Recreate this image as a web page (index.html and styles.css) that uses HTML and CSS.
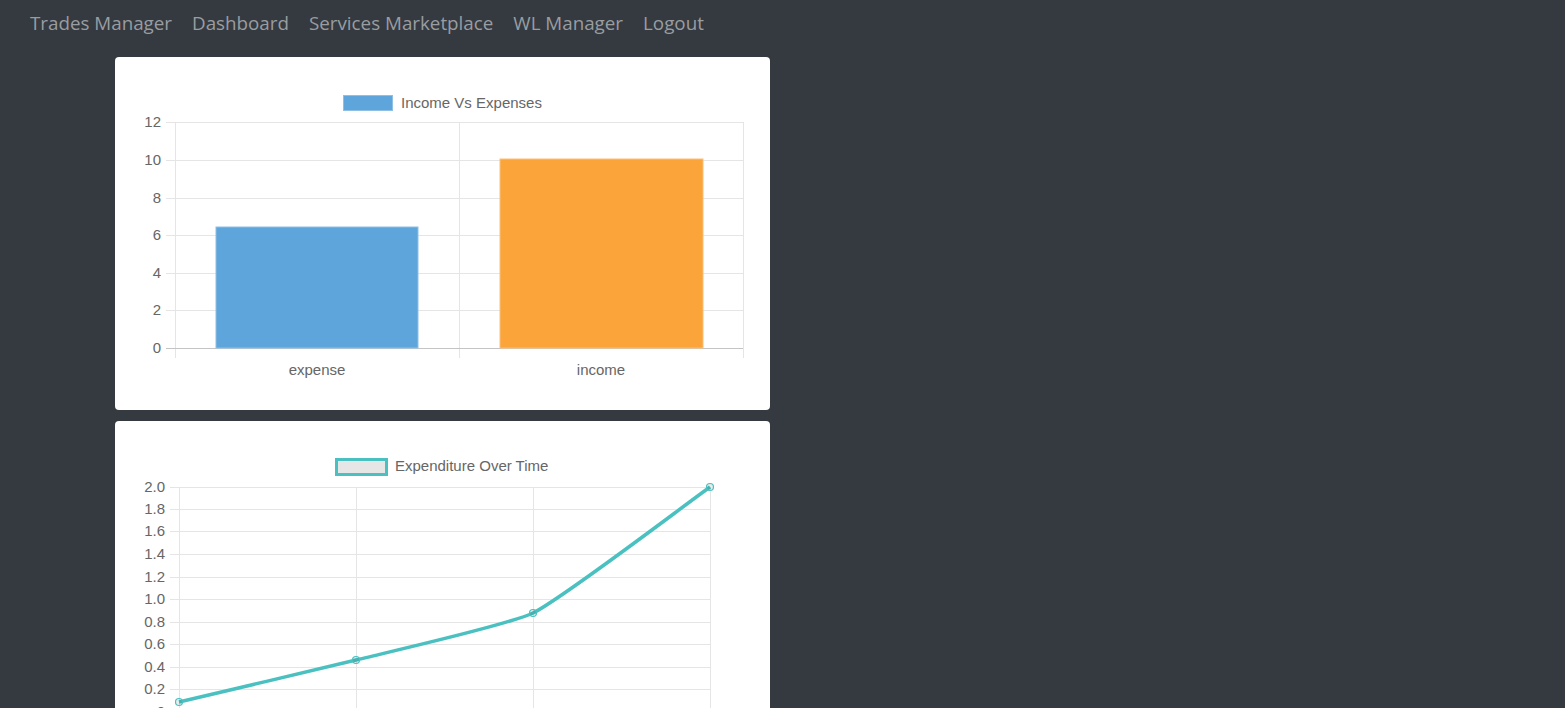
FILE: index.html
```html
<!DOCTYPE html>
<html>
<head>
<meta charset="utf-8">
<title>Dashboard</title>
<link rel="stylesheet" href="styles.css">
</head>
<body>
<nav class="navbar">
  <a class="nav-link" href="#">Trades Manager</a>
  <a class="nav-link" href="#">Dashboard</a>
  <a class="nav-link" href="#">Services Marketplace</a>
  <a class="nav-link" href="#">WL Manager</a>
  <a class="nav-link" href="#">Logout</a>
</nav>
<main class="content">
  <section class="card">
    <svg class="chart" width="655" height="353" viewBox="0 0 655 353">
      <g class="legend">
        <rect x="228.5" y="38.5" width="49" height="15" fill="#5da5da" stroke="#8ec0e6" stroke-width="1"/>
        <text x="286" y="50.5" class="lbl">Income Vs Expenses</text>
      </g>
      <g class="grid">
        <line x1="51" y1="65.5" x2="628" y2="65.5"/>
        <line x1="51" y1="103.5" x2="628" y2="103.5"/>
        <line x1="51" y1="141.5" x2="628" y2="141.5"/>
        <line x1="51" y1="178.5" x2="628" y2="178.5"/>
        <line x1="51" y1="216.5" x2="628" y2="216.5"/>
        <line x1="51" y1="253.5" x2="628" y2="253.5"/>
        <line x1="60.5" y1="65" x2="60.5" y2="301"/>
        <line x1="344.5" y1="65" x2="344.5" y2="301"/>
        <line x1="628.5" y1="65" x2="628.5" y2="301"/>
      </g>
      <line class="zero" x1="51" y1="291.5" x2="628" y2="291.5"/>
      <g class="ylbl">
        <text x="46" y="70">12</text>
        <text x="46" y="108">10</text>
        <text x="46" y="146">8</text>
        <text x="46" y="183">6</text>
        <text x="46" y="221">4</text>
        <text x="46" y="258">2</text>
        <text x="46" y="296">0</text>
      </g>
      <rect x="101" y="170" width="202" height="121" fill="#5da5da" stroke="#8ec0e6" stroke-width="1"/>
      <rect x="385" y="102" width="203" height="189" fill="#faa43a" stroke="#fbc07a" stroke-width="1"/>
      <g class="xlbl">
        <text x="202" y="318">expense</text>
        <text x="486" y="318">income</text>
      </g>
    </svg>
  </section>
  <section class="card">
    <svg class="chart" width="655" height="353" viewBox="0 0 655 353">
      <g class="legend">
        <rect x="221.5" y="38.5" width="50" height="15" fill="#e6e6e6" stroke="#4bc0c0" stroke-width="3"/>
        <text x="280" y="50" class="lbl">Expenditure Over Time</text>
      </g>
      <g class="grid">
        <line x1="55" y1="66.5" x2="595" y2="66.5"/>
        <line x1="55" y1="88.5" x2="595" y2="88.5"/>
        <line x1="55" y1="110.5" x2="595" y2="110.5"/>
        <line x1="55" y1="133.5" x2="595" y2="133.5"/>
        <line x1="55" y1="156.5" x2="595" y2="156.5"/>
        <line x1="55" y1="178.5" x2="595" y2="178.5"/>
        <line x1="55" y1="201.5" x2="595" y2="201.5"/>
        <line x1="55" y1="223.5" x2="595" y2="223.5"/>
        <line x1="55" y1="246.5" x2="595" y2="246.5"/>
        <line x1="55" y1="268.5" x2="595" y2="268.5"/>
        <line x1="64.5" y1="66" x2="64.5" y2="300"/>
        <line x1="241.5" y1="66" x2="241.5" y2="300"/>
        <line x1="418.5" y1="66" x2="418.5" y2="300"/>
        <line x1="595.5" y1="66" x2="595.5" y2="300"/>
      </g>
      <line class="zero" x1="55" y1="290.5" x2="595" y2="290.5"/>
      <g class="ylbl">
        <text x="50" y="71">2.0</text>
        <text x="50" y="93">1.8</text>
        <text x="50" y="115">1.6</text>
        <text x="50" y="138">1.4</text>
        <text x="50" y="161">1.2</text>
        <text x="50" y="183">1.0</text>
        <text x="50" y="206">0.8</text>
        <text x="50" y="228">0.6</text>
        <text x="50" y="251">0.4</text>
        <text x="50" y="273">0.2</text>
        <text x="50" y="296">0</text>
      </g>
      <path class="line" d="M64,281 C90.6,274.7 214.6,245.6 241,239 C267.7,232.3 393.7,203.9 418,192 C446.8,177.9 568.5,84.9 595,66"/>
      <g class="pts">
        <circle cx="64" cy="281" r="3.5"/>
        <circle cx="241" cy="239" r="3.5"/>
        <circle cx="418" cy="192" r="3.5"/>
        <circle cx="595" cy="66" r="3.5"/>
      </g>
    </svg>
  </section>
</main>
</body>
</html>
```
FILE: styles.css
```css
html, body {
  margin: 0;
  padding: 0;
  height: 100%;
  overflow: hidden;
}
body {
  background: #343a40;
  font-family: "Open Sans", "Noto Sans", sans-serif;
}
.navbar {
  display: flex;
  align-items: center;
  gap: 20px;
  height: 46px;
  padding: 0 30px;
  box-sizing: border-box;
}
.nav-link {
  color: #9a9da0;
  text-decoration: none;
  font-size: 18.8px;
  line-height: 1;
}
.content {
  display: flex;
  flex-direction: column;
  gap: 11px;
  padding: 11px 0 0 115px;
}
.card {
  width: 655px;
  height: 353px;
  background: #fff;
  border-radius: 4px;
  overflow: hidden;
}
.chart {
  display: block;
  font-family: "Liberation Sans", Arial, sans-serif;
  font-size: 15px;
}
.chart text {
  fill: #666;
}
.grid line {
  stroke: #e5e5e5;
  stroke-width: 1;
}
.zero {
  stroke: #c4c4c4;
  stroke-width: 1;
}
.ylbl text {
  text-anchor: end;
}
.xlbl text {
  text-anchor: middle;
}
.line {
  fill: none;
  stroke: #4bc0c0;
  stroke-width: 3.5;
  stroke-linejoin: round;
}
.pts circle {
  fill: rgba(0, 0, 0, 0.08);
  stroke: #4bc0c0;
  stroke-width: 1.2;
}
```
